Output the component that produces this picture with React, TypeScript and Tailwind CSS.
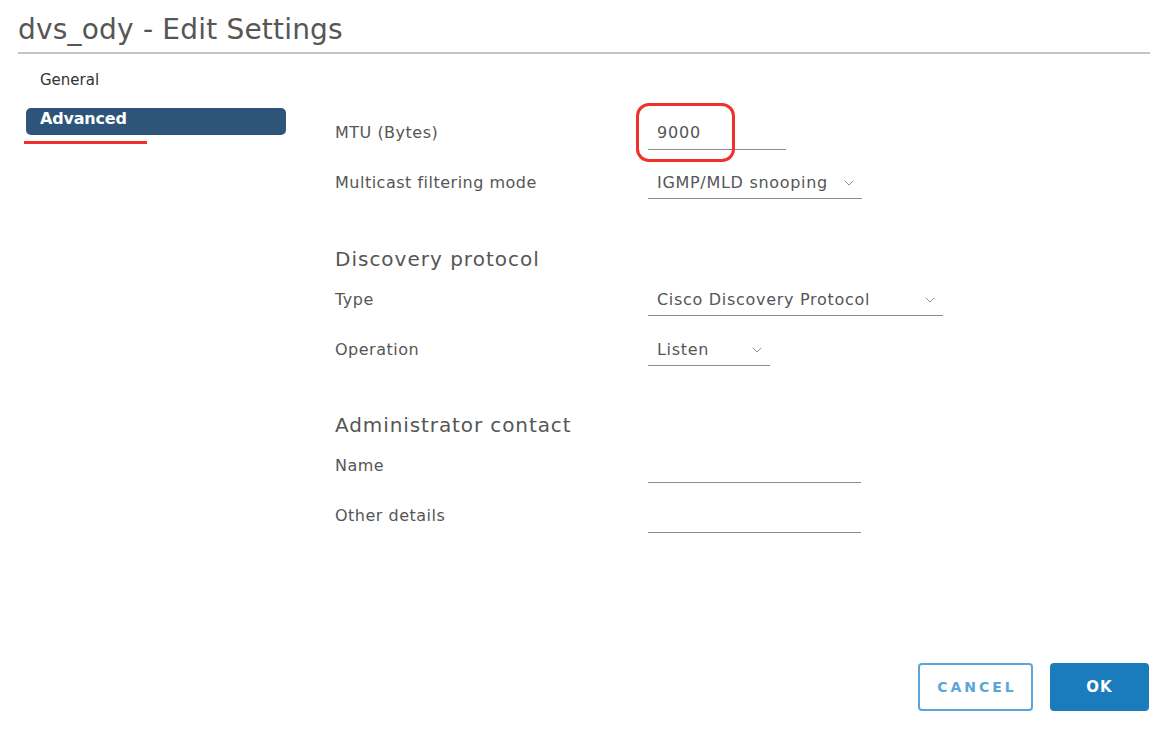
import React from 'react';
import { ChevronDown } from 'lucide-react';

const font = { fontFamily: '"DejaVu Sans", "Open Sans", sans-serif' };

const Field: React.FC<{ label: string; children: React.ReactNode }> = ({ label, children }) => (
  <div className="flex h-[50px] items-center">
    <div className="w-[313px] text-[16px] tracking-[0.5px] text-[#565656]">{label}</div>
    {children}
  </div>
);

const TextInput: React.FC<{ value?: string; width: string }> = ({ value = '', width }) => (
  <div className={`flex h-[34px] items-center border-b border-[#8c8c8c] pl-[9px] text-[16px] tracking-[0.8px] text-[#565656] ${width}`}>
    {value}
  </div>
);

const Select: React.FC<{ value: string; width: string }> = ({ value, width }) => (
  <div className={`flex h-[32px] items-center justify-between border-b border-[#8c8c8c] pl-[9px] pr-[5px] text-[16px] tracking-[0.7px] text-[#565656] ${width}`}>
    <span>{value}</span>
    <ChevronDown className="h-[16px] w-[16px] text-[#777]" strokeWidth={1.25} />
  </div>
);

export default function App() {
  return (
    <div className="flex h-[730px] w-[1170px] flex-col bg-white" style={font}>
      <div className="ml-[18px] mr-[20px] border-b-2 border-[#c4c4c4]">
        <h1 className="h-[52px] pt-[12px] text-[28px] leading-[36px] font-normal tracking-[0.2px] text-[#565656]">
          dvs_ody - Edit Settings
        </h1>
      </div>

      <div className="flex flex-1">
        <nav className="w-[310px] pt-[13px] pl-[26px]">
          <div className="h-[26px] pl-[14px] text-[15px] leading-[26px] text-[#333]">General</div>
          <div className="mt-[15px] w-[260px]">
            <div className="h-[27px] rounded-[5px] bg-[#2e5479] pl-[14px] text-[16px] leading-[22px] font-bold tracking-[-0.2px] text-white">
              Advanced
            </div>
            <div className="mt-[6px] ml-[-2px] h-[3px] w-[123px] bg-[#f0302a]" />
          </div>
        </nav>

        <div className="flex-1 pt-[54px] pl-[25px]">
          <Field label="MTU (Bytes)">
            <div className="relative">
              <TextInput value="9000" width="w-[138px]" />
              <div className="absolute left-[-12px] top-[-13px] h-[59px] w-[99px] rounded-[13px] border-[3px] border-[#f0302a]" />
            </div>
          </Field>
          <Field label="Multicast filtering mode">
            <Select value="IGMP/MLD snooping" width="w-[214px]" />
          </Field>

          <h2 className="mt-[35px] h-[32px] text-[20px] leading-[32px] font-normal tracking-[1px] text-[#565656]">Discovery protocol</h2>
          <Field label="Type">
            <Select value="Cisco Discovery Protocol" width="w-[295px]" />
          </Field>
          <Field label="Operation">
            <Select value="Listen" width="w-[122px]" />
          </Field>

          <h2 className="mt-[34px] h-[32px] text-[20px] leading-[32px] font-normal tracking-[0.9px] text-[#565656]">Administrator contact</h2>
          <Field label="Name">
            <TextInput width="w-[213px]" />
          </Field>
          <Field label="Other details">
            <TextInput width="w-[213px]" />
          </Field>
        </div>
      </div>

      <div className="flex justify-end gap-[17px] pr-[21px] pb-[19px]">
        <button className="h-[48px] w-[115px] rounded-[4px] border-2 border-[#5aa6d8] pl-[3px] text-[14px] font-bold tracking-[3px] text-[#5aa6d8]">
          CANCEL
        </button>
        <button className="h-[48px] w-[99px] rounded-[4px] bg-[#1a7bbd] text-[15px] font-bold tracking-[1px] text-white">
          OK
        </button>
      </div>
    </div>
  );
}
